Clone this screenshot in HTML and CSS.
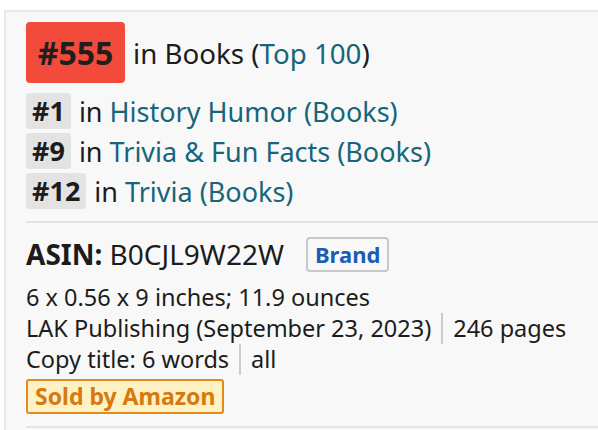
FILE: index.html
```html
<!DOCTYPE html>
<html>
<head>
<meta charset="utf-8">
<link rel="stylesheet" href="styles.css">
</head>
<body>
<div class="panel">
  <section class="ranks">
    <div class="main-rank">
      <span class="badge-red">#555</span>
      <span class="main-text">in Books (<a class="link">Top 100</a>)</span>
    </div>
    <div class="sub-rank"><span class="badge-gray">#1</span><span class="sub-text">in <a class="link">History Humor (Books)</a></span></div>
    <div class="sub-rank"><span class="badge-gray">#9</span><span class="sub-text">in <a class="link">Trivia &amp; Fun Facts (Books)</a></span></div>
    <div class="sub-rank"><span class="badge-gray">#12</span><span class="sub-text">in <a class="link">Trivia (Books)</a></span></div>
  </section>
  <section class="details">
    <div class="asin-row">
      <span class="asin"><b>ASIN:</b> B0CJL9W22W</span>
      <span class="brand">Brand</span>
    </div>
    <div class="line">6 x 0.56 x 9 inches; 11.9 ounces</div>
    <div class="line"><span>LAK Publishing (September 23, 2023)</span><span class="sep"></span><span>246 pages</span></div>
    <div class="line"><span>Copy title: 6 words</span><span class="sep"></span><span>all</span></div>
    <div class="sold"><span class="sold-badge">Sold by Amazon</span></div>
  </section>
  <section class="next"></section>
</div>
</body>
</html>
```
FILE: styles.css
```css
html, body {
  margin: 0;
  padding: 0;
  background: #ffffff;
}
body {
  font-family: "Noto Sans", "Open Sans", sans-serif;
  color: #1c1c1c;
  overflow: hidden;
  height: 430px;
}
.panel {
  margin: 10px 0 0 4px;
  border-top: 2px solid #e8e8e8;
  border-left: 2px solid #e8e8e8;
  background: #f8f8f8;
  padding: 10px 0 0 20px;
  height: 500px;
}
.link {
  color: #17657a;
  text-decoration: none;
}
.main-rank {
  display: flex;
  align-items: center;
  height: 61px;
}
.badge-red {
  background: #f34b3b;
  color: #1f1f1f;
  font-weight: 700;
  font-size: 32px;
  height: 61px;
  line-height: 61px;
  border-radius: 4px;
  box-sizing: border-box;
  width: 99px;
  text-align: center;
}
.main-text {
  font-size: 27.7px;
  margin-left: 8px;
}
.ranks {
  padding-bottom: 8px;
}
.main-rank + .sub-rank {
  margin-top: 10px;
}
.sub-rank {
  display: flex;
  align-items: center;
  height: 36px;
  margin-bottom: 4px;
}
.badge-gray {
  background: #e3e3e3;
  font-weight: 700;
  font-size: 27px;
  height: 36px;
  line-height: 36px;
  padding: 0 6px;
  border-radius: 3px;
}
.sub-text {
  font-size: 27px;
  margin-left: 8px;
}
.details {
  border-top: 2px solid #e4e4e4;
  padding-top: 13px;
  font-size: 23.5px;
  padding-bottom: 12px;
}
.asin-row {
  display: flex;
  align-items: center;
  height: 36px;
  margin-bottom: 10px;
}
.asin {
  font-size: 28px;
}
.brand {
  margin-left: 22px;
  border: 2px solid #c8c8c8;
  border-radius: 4px;
  color: #1b5cb4;
  font-weight: 700;
  font-size: 22px;
  height: 35px;
  line-height: 31px;
  box-sizing: border-box;
  padding: 0 7px;
}
.line {
  display: flex;
  align-items: stretch;
  height: 31px;
  line-height: 31px;
}
.sep {
  width: 2px;
  background: #cccccc;
  margin: 0 10px;
}
.sold {
  margin-top: 4px;
  display: flex;
}
.sold-badge {
  background: #fef1c4;
  border: 2px solid #e38a1e;
  border-radius: 3px;
  color: #d67a0f;
  font-weight: 700;
  font-size: 23px;
  height: 35px;
  line-height: 31px;
  box-sizing: border-box;
  padding: 0 7px;
}
.next {
  border-top: 2px solid #e4e4e4;
}
```
